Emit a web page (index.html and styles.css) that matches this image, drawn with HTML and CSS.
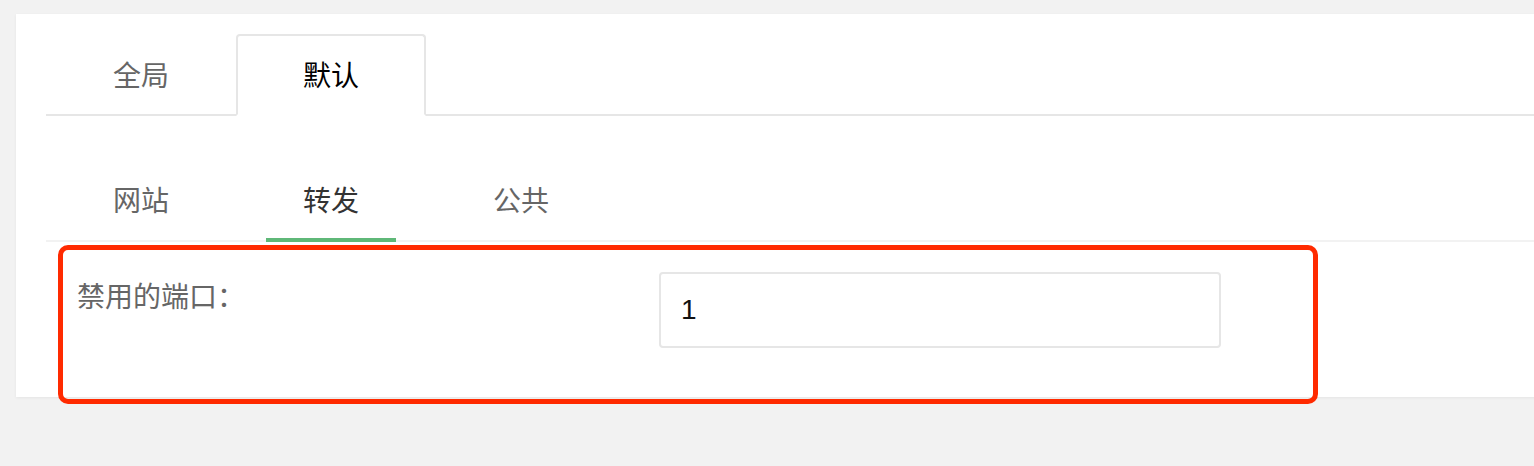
FILE: index.html
```html
<!DOCTYPE html>
<html lang="zh-CN">
<head>
<meta charset="utf-8">
<title>设置</title>
<link rel="stylesheet" href="styles.css">
</head>
<body>
<div class="card">
  <ul class="tab-title">
    <li class="tab">全局</li>
    <li class="tab active">默认</li>
  </ul>
  <ul class="brief-title">
    <li class="brief">网站</li>
    <li class="brief active">转发</li>
    <li class="brief">公共</li>
  </ul>
  <div class="form-item">
    <label class="form-label">禁用的端口：</label>
    <div class="input-block"><input class="input" type="text" value="1"></div>
  </div>
</div>
<div class="highlight"></div>
</body>
</html>
```
FILE: styles.css
```css
html, body {
  margin: 0;
  padding: 0;
}
body {
  background: #f2f2f2;
  width: 1534px;
  height: 466px;
  overflow: hidden;
  position: relative;
  font-family: "Noto Sans CJK SC", "Noto Sans", sans-serif;
}
.card {
  position: absolute;
  left: 16px;
  top: 14px;
  width: 1540px;
  height: 383px;
  background: #fff;
  box-shadow: 0 1px 3px rgba(0, 0, 0, 0.06);
  padding: 20px 0 0 30px;
  box-sizing: border-box;
}
ul {
  list-style: none;
  margin: 0;
  padding: 0;
}
.tab-title {
  display: flex;
  height: 80px;
  border-bottom: 2px solid #e6e6e6;
}
.tab {
  position: relative;
  width: 190px;
  height: 80px;
  line-height: 80px;
  text-align: center;
  font-size: 28px;
  color: #666;
}
.tab.active {
  color: #000;
}
.tab.active::after {
  content: "";
  position: absolute;
  left: 0;
  top: 0;
  width: 100%;
  height: 82px;
  border: 2px solid #e6e6e6;
  border-bottom-color: #fff;
  border-radius: 4px 4px 0 0;
  box-sizing: border-box;
}
.brief-title {
  display: flex;
  margin-top: 44px;
  height: 80px;
  border-bottom: 2px solid #f2f2f2;
}
.brief {
  position: relative;
  width: 190px;
  height: 80px;
  line-height: 78px;
  text-align: center;
  font-size: 28px;
  color: #666;
}
.brief.active {
  color: #333;
}
.brief.active::after {
  content: "";
  position: absolute;
  left: 30px;
  right: 30px;
  bottom: -2px;
  height: 4px;
  background: #5fb878;
}
.form-item {
  display: flex;
  margin-top: 30px;
}
.form-label {
  width: 613px;
  padding-left: 31px;
  box-sizing: border-box;
  padding-top: 3px;
  line-height: 40px;
  font-size: 28px;
  color: #666;
}
.input {
  display: block;
  width: 562px;
  height: 76px;
  box-sizing: border-box;
  border: 2px solid #e6e6e6;
  border-radius: 4px;
  padding: 0 20px;
  font-family: "Liberation Sans", Arial, sans-serif;
  font-size: 28px;
  color: #111;
  background: #fff;
  outline: none;
}
.highlight {
  position: absolute;
  left: 58px;
  top: 245px;
  width: 1260px;
  height: 159px;
  box-sizing: border-box;
  border: 5px solid #ff2a00;
  border-radius: 10px;
}
```
